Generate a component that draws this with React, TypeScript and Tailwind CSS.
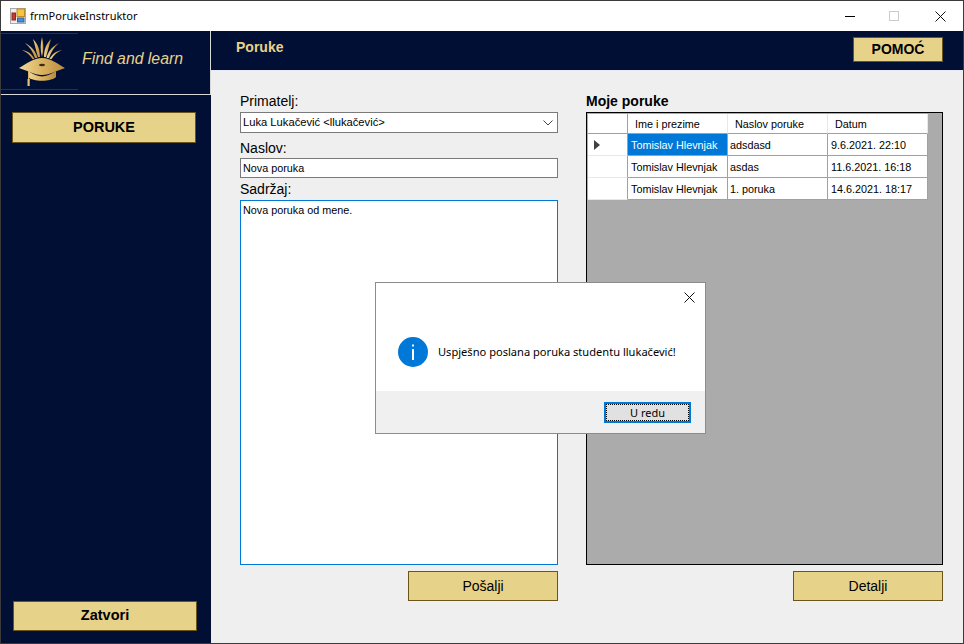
const rows = [
  { name: "Tomislav Hlevnjak", title: "adsdasd", date: "9.6.2021. 22:10" },
  { name: "Tomislav Hlevnjak", title: "asdas", date: "11.6.2021. 16:18" },
  { name: "Tomislav Hlevnjak", title: "1. poruka", date: "14.6.2021. 18:17" },
];

function CloseIcon({ className }: { className?: string }) {
  return (
    <svg width="11" height="11" viewBox="0 0 11 11" className={className}>
      <path d="M0.5 0.5 L10.5 10.5 M10.5 0.5 L0.5 10.5" stroke="#111" strokeWidth="1" fill="none" />
    </svg>
  );
}

function AppIcon() {
  return (
    <svg width="16" height="16" viewBox="0 0 16 16" className="shrink-0">
      <rect x="0.5" y="0.5" width="15" height="15" fill="#eeeeee" stroke="#a9a9a9" />
      <rect x="7" y="1" width="7.5" height="7.5" fill="#f5c542" stroke="#b9892a" />
      <rect x="2" y="5" width="3.5" height="7" fill="#c8392f" stroke="#8b2a24" />
      <rect x="7.5" y="10" width="6.5" height="4" fill="#4d8bd9" stroke="#2f5f9f" />
    </svg>
  );
}

function Logo() {
  return (
    <svg width="48" height="50" viewBox="0 0 48 50">
      <defs>
        <linearGradient id="gold" x1="0" y1="0" x2="1" y2="0">
          <stop offset="0" stopColor="#f0d898" />
          <stop offset="0.5" stopColor="#d9b25f" />
          <stop offset="1" stopColor="#b98c3e" />
        </linearGradient>
      </defs>
      {/* fan */}
      <g fill="url(#gold)">
        <path d="M24 20 C22 13 22.5 6 24 0 C25.5 6 26 13 24 20 Z" />
        <path d="M22 20 C22 13 20 7 15 2 C17 8 18 14 20 20 Z" />
        <path d="M26 20 C26 13 28 7 33 2 C31 8 30 14 28 20 Z" />
        <path d="M19.5 21 C18 14 13 9 7 6 C12 10 15 15 17 21 Z" />
        <path d="M28.5 21 C30 14 35 9 41 6 C36 10 33 15 31 21 Z" />
        <path d="M16.5 22 C14 17 10 14 4 13 C9 15 12 18 14.5 22 Z" />
        <path d="M31.5 22 C34 17 38 14 44 13 C39 15 36 18 33.5 22 Z" />
      </g>
      {/* cap */}
      <path d="M1 31 C8 27 16 21 24 21 C32 21 40 27 47 31 C40 33 32 38 24 38 C16 38 8 33 1 31 Z" fill="url(#gold)" />
      <ellipse cx="24" cy="28" rx="3" ry="1.2" fill="#3a2c14" />
      <path d="M10 34 C15 37 20 39.5 24 39.5 C28 39.5 33 37 38 34 L38 40 C33 45 15 45 10 40 Z" fill="url(#gold)" />
      <rect x="10" y="34" width="1.2" height="10" fill="#d9b25f" />
      <rect x="9.5" y="42" width="2.2" height="7" fill="#e3c578" />
    </svg>
  );
}

function GoldButton({ children, className }: { children: React.ReactNode; className: string }) {
  return (
    <button
      className={
        "flex items-center justify-center border border-[#6b5518] bg-[#e7d28a] text-black " + className
      }
    >
      {children}
    </button>
  );
}

export default function App() {
  return (
    <div className="relative flex h-[644px] w-[964px] flex-col overflow-hidden border border-[#3a3a3a] bg-[#efefef] font-['Liberation_Sans',sans-serif] text-black">
      {/* title bar */}
      <div className="flex h-[30px] shrink-0 items-center bg-white pl-[9px]">
        <AppIcon />
        <span className="ml-[4px] font-['Noto_Sans',sans-serif] text-[11px]">frmPorukeInstruktor</span>
        <div className="ml-auto flex items-center">
          <div className="mr-[34px] h-px w-[10px] bg-black" />
          <div className="mr-[36px] h-[10px] w-[10px] border border-[#cccccc]" />
          <CloseIcon className="mr-[17px]" />
        </div>
      </div>

      <div className="flex min-h-0 flex-1">
        {/* sidebar */}
        <aside className="flex w-[210px] shrink-0 flex-col bg-[#020f35] pb-[12px]">
          <div className="flex h-[64px] shrink-0 border-r border-b border-[#d8d8d8]">
            <div className="mt-[2px] flex h-[57px] w-[77px] shrink-0 items-center justify-center border-y border-[#252f55] pl-[4px]">
              <Logo />
            </div>
            <span className="ml-[4px] mt-[18px] text-[15.8px] leading-[20px] italic text-[#e7d28a]">Find and learn</span>
          </div>
          <GoldButton className="ml-[11px] mt-[17px] h-[31px] w-[184px] text-[14.5px] font-bold">PORUKE</GoldButton>
          <GoldButton className="ml-[12px] mt-auto h-[30px] w-[184px] text-[14.5px] font-bold">Zatvori</GoldButton>
        </aside>

        <div className="flex min-w-0 flex-1 flex-col">
          {/* header */}
          <header className="flex h-[40px] shrink-0 justify-between border-b border-[#e6e9f5] bg-[#020f35] pl-[25px] pr-[20px]">
            <span className="mt-[8px] text-[14px] leading-[16px] font-bold text-[#e7d28a]">Poruke</span>
            <GoldButton className="mt-[6px] h-[25px] w-[90px] text-[14px] font-bold">POMOĆ</GoldButton>
          </header>

          <div className="flex flex-1 pl-[29px] pr-[20px] pt-[22px]">
            {/* form */}
            <div className="flex w-[318px] shrink-0 flex-col">
              <label className="text-[14px] leading-[17px]">Primatelj:</label>
              <div className="mt-[2px] flex h-[21px] items-center justify-between border border-[#7a7a7a] bg-white pl-[2px] pr-[4px] text-[11.2px]">
                <span>Luka Lukačević &lt;llukačević&gt;</span>
                <svg width="10" height="6" viewBox="0 0 10 6">
                  <path d="M0.5 0.5 L5 5 L9.5 0.5" fill="none" stroke="#444" strokeWidth="1" />
                </svg>
              </div>
              <label className="mt-[7px] text-[14px] leading-[17px]">Naslov:</label>
              <div className="mt-px flex h-[20px] items-center border border-[#7a7a7a] bg-white pl-[2px] text-[10.8px]">
                Nova poruka
              </div>
              <label className="mt-[3px] text-[14px] leading-[17px]">Sadržaj:</label>
              <div className="mt-[2px] h-[365px] border border-[#0078d7] bg-white pl-[2px] pt-[2px] text-[10.8px] leading-[15px]">
                Nova poruka od mene.
              </div>
              <GoldButton className="ml-auto mt-[6px] h-[30px] w-[150px] text-[14px]">Pošalji</GoldButton>
            </div>

            {/* messages */}
            <div className="ml-[28px] flex flex-1 flex-col">
              <h2 className="text-[14px] leading-[17px] font-bold">Moje poruke</h2>
              <div className="mt-[2px] h-[453px] border border-black bg-[#ababab] pl-[1px] pt-[1px]">
                <div className="grid grid-cols-[40px_100px_100px_100px] text-[10.8px]">
                  <div className="h-[20px] border-r border-b border-r-[#a0a0a0] border-b-[#a0a0a0] bg-white" />
                  <div className="flex h-[20px] items-center border-r border-b border-r-[#e8e8e8] border-b-[#a0a0a0] bg-white pl-[7px] pt-px">Ime i prezime</div>
                  <div className="flex h-[20px] items-center border-r border-b border-r-[#e8e8e8] border-b-[#a0a0a0] bg-white pl-[7px] pt-px">Naslov poruke</div>
                  <div className="flex h-[20px] items-center border-r border-b border-r-[#e8e8e8] border-b-[#a0a0a0] bg-white pl-[7px] pt-px">Datum</div>
                  {rows.map((row, i) => (
                    <div key={row.date} className="contents">
                      <div className="flex h-[22px] items-center border-r border-b border-r-[#a0a0a0] border-b-[#e8e8e8] bg-white pl-[6px]">
                        {i === 0 ? (
                          <svg width="6" height="10" viewBox="0 0 6 10">
                            <path d="M0 0 L6 5 L0 10 Z" fill="#404040" />
                          </svg>
                        ) : null}
                      </div>
                      <div className={"flex h-[22px] items-center border-r border-b border-[#a0a0a0] pl-[3px] pt-px " + (i === 0 ? "bg-[#0078d7] text-white" : "bg-white")}>
                        {row.name}
                      </div>
                      <div className="flex h-[22px] items-center border-r border-b border-[#a0a0a0] bg-white pl-[2px] pt-px">{row.title}</div>
                      <div className="flex h-[22px] items-center border-r border-b border-[#a0a0a0] bg-white pl-[3px] pt-px">{row.date}</div>
                    </div>
                  ))}
                </div>
              </div>
              <GoldButton className="ml-auto mt-[6px] h-[30px] w-[150px] text-[14px]">Detalji</GoldButton>
            </div>
          </div>
        </div>
      </div>

      {/* message box */}
      <div className="absolute left-[374px] top-[281px] flex h-[152px] w-[331px] flex-col border border-[#8c8c8c] bg-white font-['Noto_Sans',sans-serif]">
        <div className="relative flex-1">
          <CloseIcon className="absolute right-[10px] top-[9px]" />
          <div className="flex items-center pl-[22px] pt-[54px]">
            <svg width="30" height="30" viewBox="0 0 30 30" className="shrink-0">
              <circle cx="15" cy="15" r="15" fill="#0078d7" />
              <rect x="14" y="12" width="2" height="11" fill="#fff" />
              <rect x="14" y="7.5" width="2" height="2" fill="#fff" />
            </svg>
            <span className="ml-[10px] mt-px text-[11.1px]">Uspješno poslana poruka studentu llukačević!</span>
          </div>
        </div>
        <div className="flex h-[42px] shrink-0 items-start justify-end bg-[#f0f0f0] pr-[14px] pt-[11px]">
          <button className="flex h-[21px] w-[87px] items-center justify-center border-2 border-[#0078d7] bg-[#e1e1e1] pt-px text-[11px] outline-1 -outline-offset-3 outline-dotted outline-black">
            U redu
          </button>
        </div>
      </div>
    </div>
  );
}
